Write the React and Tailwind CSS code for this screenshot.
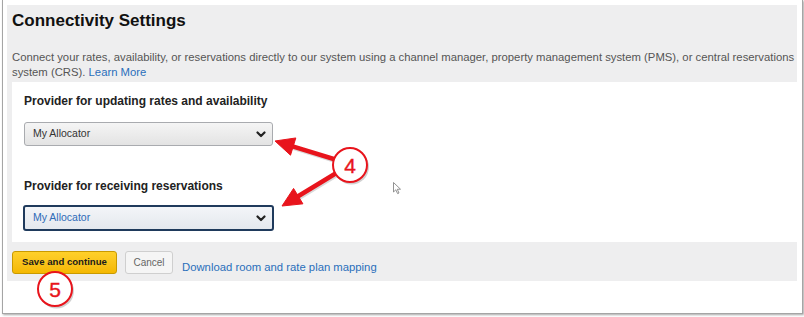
import React from "react";

const RED = "#e8141c";

// arrowhead triangle points for an arrow from tail to tip
const headPoints = (tail, tip, len = 19, half = 9) => {
  const dx = tip[0] - tail[0];
  const dy = tip[1] - tail[1];
  const d = Math.hypot(dx, dy);
  const ux = dx / d;
  const uy = dy / d;
  const bx = tip[0] - ux * len;
  const by = tip[1] - uy * len;
  return [
    `${tip[0]},${tip[1]}`,
    `${bx - uy * half},${by + ux * half}`,
    `${bx + uy * half},${by - ux * half}`,
  ].join(" ");
};

const lineEnd = (tail, tip, len = 15) => {
  const dx = tip[0] - tail[0];
  const dy = tip[1] - tail[1];
  const d = Math.hypot(dx, dy);
  return [tip[0] - (dx / d) * len, tip[1] - (dy / d) * len];
};

const Arrow = ({ tail, tip }) => {
  const end = lineEnd(tail, tip);
  return (
    <g>
      <line x1={tail[0] + 1} y1={tail[1] + 1.5} x2={end[0] + 1} y2={end[1] + 1.5} stroke="rgba(0,0,0,0.15)" strokeWidth="4.5" strokeLinecap="round" />
      <line x1={tail[0]} y1={tail[1]} x2={end[0]} y2={end[1]} stroke={RED} strokeWidth="4.5" strokeLinecap="round" />
      <polygon points={headPoints(tail, tip)} fill={RED} stroke={RED} strokeWidth="1" strokeLinejoin="round" />
    </g>
  );
};

const Badge = ({ cx, cy, n }) => (
  <g>
    <circle cx={cx + 1.5} cy={cy + 2} r="17.5" fill="rgba(0,0,0,0.18)" />
    <circle cx={cx} cy={cy} r="17" fill="#fff" stroke={RED} strokeWidth="2" />
    <text
      x={cx}
      y={cy + 7.5}
      textAnchor="middle"
      fontSize="21"
      fill={RED}
      stroke={RED}
      strokeWidth="0.4"
      fontFamily="'Liberation Sans', Arial, sans-serif"
    >
      {n}
    </text>
  </g>
);

const Chevron = () => (
  <svg width="10" height="7" viewBox="0 0 10 7" className="shrink-0">
    <path d="M1.5 1.5 L5 5 L8.5 1.5" fill="none" stroke="#222" strokeWidth="2.2" strokeLinecap="round" strokeLinejoin="round" />
  </svg>
);

const SelectBox = ({ focused }) =>
  focused ? (
    <div className="-ml-px flex h-[26px] w-[251px] items-center justify-between rounded-[3px] border-2 border-[#1f3a5c] bg-gradient-to-b from-[#f3f5f8] to-[#e4e8ee] pl-[8px] pr-[6px]">
      <span className="text-[10.5px] text-[#2e6bb8]">My Allocator</span>
      <Chevron />
    </div>
  ) : (
    <div className="flex h-[24px] w-[249px] items-center justify-between rounded-[3px] border border-[#a9abaf] bg-gradient-to-b from-[#f5f5f5] to-[#e3e3e3] pl-[8px] pr-[6px]">
      <span className="text-[10.5px] text-[#333]">My Allocator</span>
      <Chevron />
    </div>
  );

export default function App() {
  return (
    <div
      className="relative h-[317px] w-[804px] overflow-hidden bg-white"
      style={{ fontFamily: "'Liberation Sans', Arial, sans-serif" }}
    >
      <div className="ml-[2px] h-[314px] w-[801px] border-x border-b border-[#a5a5a5] pl-[4px] pt-[5px] shadow-[1px_1px_2px_rgba(0,0,0,0.35)]">
        <div className="w-[790px] bg-[#eeeeef]">
          <div className="h-[77px] pl-[5px] pt-[6px]">
            <h1 className="text-[17px] font-bold leading-[20px] text-[#111]">Connectivity Settings</h1>
            <p className="mt-[19px] text-[11.3px] leading-[15px] text-[#555]">
              Connect your rates, availability, or reservations directly to our system using a channel manager, property
              management system (PMS), or central reservations system (CRS). <a className="text-[#2a6ebb]">Learn More</a>
            </p>
          </div>
          <div className="ml-[5px] h-[160px] w-[785px] bg-white pl-[12px] pt-[12px]">
            <h2 className="text-[12px] font-bold leading-[15px] text-[#222]">Provider for updating rates and availability</h2>
            <div className="mt-[13px]">
              <SelectBox />
            </div>
            <h2 className="mt-[33px] text-[12px] font-bold leading-[15px] text-[#222]">Provider for receiving reservations</h2>
            <div className="mt-[11px]">
              <SelectBox focused />
            </div>
          </div>
          <div className="flex h-[39px] items-start pl-[5px] pt-[9px]">
            <button className="h-[23px] w-[105px] rounded-[3px] border border-[#c99a00] bg-gradient-to-b from-[#ffd02a] to-[#f4b800] text-[9.6px] font-bold text-[#1a1a1a]">
              Save and continue
            </button>
            <button className="ml-[8px] h-[23px] w-[48px] rounded-[3px] border border-[#cfcfcf] bg-[#f5f5f5] text-[10px] text-[#666]">
              Cancel
            </button>
            <span className="ml-[9px] mt-[9px] text-[11.3px] leading-[14px] text-[#2a6ebb]">
              Download room and rate plan mapping
            </span>
          </div>
        </div>
      </div>

      {/* annotation overlay */}
      <svg className="pointer-events-none absolute left-0 top-0" width="804" height="317">
        <Arrow tail={[337, 160]} tip={[275, 141]} />
        <Arrow tail={[338, 172]} tip={[282, 206]} />
        <Badge cx={350} cy={165} n="4" />
        <Badge cx={55} cy={289} n="5" />
        <path
          d="M393.5 182.5 L393.5 192 L395.8 189.8 L397.6 193.6 L399 193 L397.3 189.3 L400.5 189.2 Z"
          fill="#fff"
          stroke="#777"
          strokeWidth="0.8"
        />
      </svg>
    </div>
  );
}
